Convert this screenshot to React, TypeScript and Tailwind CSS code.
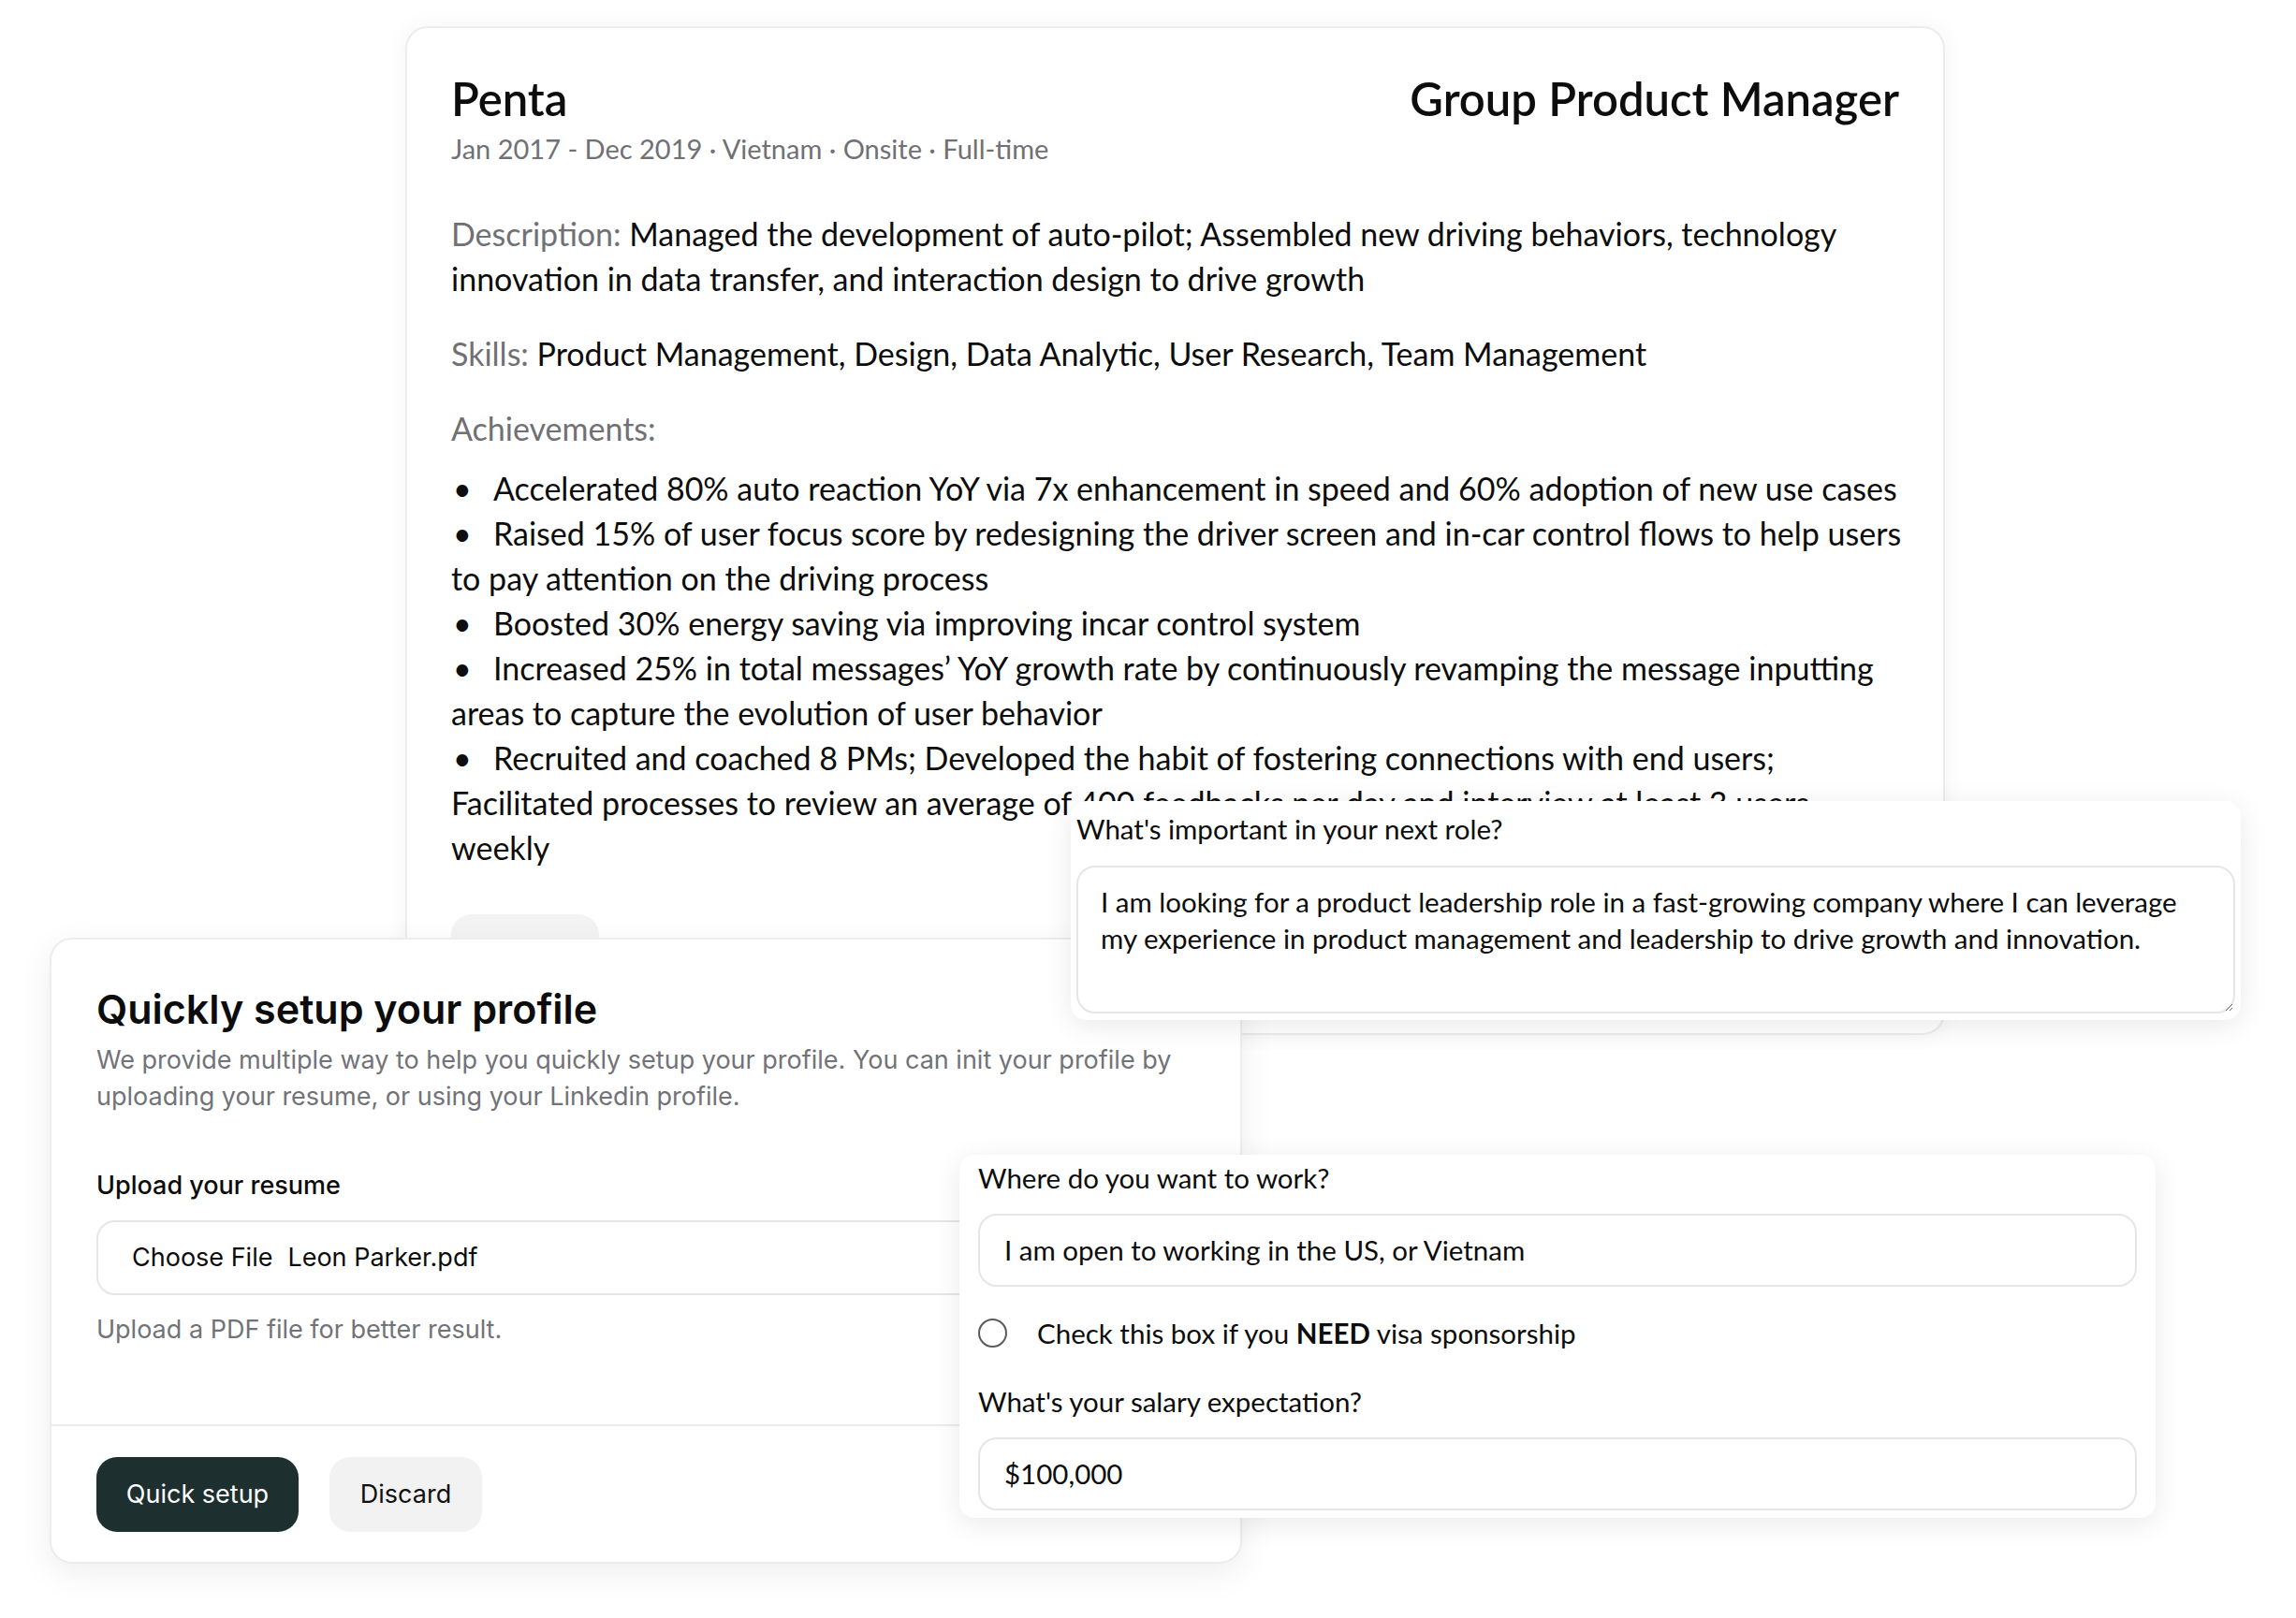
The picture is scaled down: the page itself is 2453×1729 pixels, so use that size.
import React from 'react'

const bullets: string[][] = [
  ['Accelerated 80% auto reaction YoY via 7x enhancement in speed and 60% adoption of new use cases'],
  ['Raised 15% of user focus score by redesigning the driver screen and in-car control flows to help users', 'to pay attention on the driving process'],
  ['Boosted 30% energy saving via improving incar control system'],
  ['Increased 25% in total messages’ YoY growth rate by continuously revamping the message inputting', 'areas to capture the evolution of user behavior'],
  ['Recruited and coached 8 PMs; Developed the habit of fostering connections with end users;', 'Facilitated processes to review an average of 400 feedbacks per day and interview at least 3 users', 'weekly'],
]

const ExperienceCard: React.FC = () => (
  <div className="absolute left-[433px] top-[28px] z-0 w-[1645px] rounded-[24px] border-2 border-[#ececec] bg-white p-[47px] font-['Lato',sans-serif] text-[#0d0d0d] shadow-[0_0_24px_rgba(0,0,0,0.05)]">
    <div className="flex items-center justify-between">
      <h2 className="text-[49px] leading-[56px] font-semibold">Penta</h2>
      <h3 className="text-[49px] leading-[56px] font-semibold">Group Product Manager</h3>
    </div>
    <p className="mt-[6px] text-[29px] leading-[39px] text-[#707075]">
      Jan 2017 - Dec 2019 · Vietnam · Onsite · Full-time
    </p>

    <div className="mt-[48px] text-[34px] leading-[48px] whitespace-nowrap">
      <p>
        <span className="text-[#707075]">Description:</span> Managed the development of auto-pilot; Assembled new driving behaviors, technology
        <br />
        innovation in data transfer, and interaction design to drive growth
      </p>
      <p className="mt-[32px]">
        <span className="text-[#707075]">Skills:</span> Product Management, Design, Data Analytic, User Research, Team Management
      </p>
      <p className="mt-[32px] text-[#707075]">Achievements:</p>
      <ul className="mt-[16px]">
        {bullets.map((lines, i) => (
          <li key={i}>
            <span className="inline-block w-[45px] pl-[2px]">•</span>
            {lines.map((line, j) => (
              <React.Fragment key={j}>
                {j > 0 && <br />}
                {line}
              </React.Fragment>
            ))}
          </li>
        ))}
      </ul>
    </div>

    {/* button mostly hidden under the profile card */}
    <div className="mt-[47px] h-[80px] w-[158px] rounded-[22px] bg-[#f3f3f3]" />
  </div>
)

const ProfileCard: React.FC = () => (
  <div className="absolute left-[53px] top-[1002px] z-10 w-[1274px] rounded-[24px] border-2 border-[#ececec] bg-white font-['Inter',sans-serif] text-[#0c0c0c] shadow-[0_10px_36px_rgba(0,0,0,0.07)]">
    <div className="px-[48px] pt-[50px] pb-[82px]">
      <h2 className="text-[43px] leading-[48px] font-semibold">Quickly setup your profile</h2>
      <p className="mt-[11px] text-[27px] leading-[39px] text-[#727279]">
        We provide multiple way to help you quickly setup your profile. You can init your profile by
        <br />
        uploading your resume, or using your Linkedin profile.
      </p>
      <label className="mt-[56px] block text-[27px] leading-[39px] font-medium">Upload your resume</label>
      <div className="mt-[18px] flex h-[80px] items-center rounded-[20px] border-2 border-[#e6e6e6] px-[36px] text-[27px]">
        <span>Choose File</span>
        <span className="ml-[16px]">Leon Parker.pdf</span>
      </div>
      <p className="mt-[17px] text-[27px] leading-[39px] text-[#727279]">Upload a PDF file for better result.</p>
    </div>
    <div className="flex gap-[33px] border-t-2 border-[#ececec] px-[48px] pt-[33px] pb-[32px]">
      <button className="h-[80px] w-[216px] rounded-[22px] bg-[#1d2f2f] text-[27px] text-white">Quick setup</button>
      <button className="h-[80px] w-[163px] rounded-[22px] bg-[#f2f2f2] text-[27px] text-[#111111]">Discard</button>
    </div>
  </div>
)

const NextRoleCard: React.FC = () => (
  <div className="absolute left-[1144px] top-[856px] z-20 w-[1250px] rounded-[16px] bg-white px-[6px] pt-[10px] pb-[7px] font-['Lato',sans-serif] text-[#0d0d0d] shadow-[0_6px_30px_rgba(0,0,0,0.09)]">
    <label className="block text-[29.5px] leading-[39px]">What's important in your next role?</label>
    <textarea
      className="mt-[20px] block h-[158px] w-full resize-y rounded-[20px] border-2 border-[#e6e6e6] px-[24px] py-[17px] text-[29.5px] leading-[39px] text-[#0d0d0d] outline-none"
      defaultValue={
        'I am looking for a product leadership role in a fast-growing company where I can leverage\nmy experience in product management and leadership to drive growth and innovation.'
      }
    />
  </div>
)

const WorkCard: React.FC = () => (
  <div className="absolute left-[1025px] top-[1234px] z-30 w-[1278px] rounded-[16px] bg-white px-[20px] pt-[5px] pb-[8px] font-['Lato',sans-serif] text-[#0d0d0d] shadow-[0_6px_30px_rgba(0,0,0,0.09)]">
    <label className="block text-[29.5px] leading-[39px]">Where do you want to work?</label>
    <div className="mt-[19px] flex h-[78px] items-center rounded-[20px] border-2 border-[#e6e6e6] px-[26px] text-[29.5px]">
      I am open to working in the US, or Vietnam
    </div>
    <div className="mt-[30px] flex items-center gap-[32px] text-[29.5px] leading-[39px]">
      <span className="h-[31px] w-[31px] shrink-0 rounded-full border-2 border-[#5a5a5a]" />
      <span>
        Check this box if you <b className="font-bold">NEED</b> visa sponsorship
      </span>
    </div>
    <label className="mt-[34px] block text-[29.5px] leading-[39px]">What's your salary expectation?</label>
    <div className="mt-[19px] flex h-[78px] items-center rounded-[20px] border-2 border-[#e6e6e6] px-[26px] text-[29.5px]">
      $100,000
    </div>
  </div>
)

export default function App() {
  return (
    <div className="relative h-[1729px] w-[2453px] overflow-hidden bg-white">
      <ExperienceCard />
      <ProfileCard />
      <NextRoleCard />
      <WorkCard />
    </div>
  )
}
